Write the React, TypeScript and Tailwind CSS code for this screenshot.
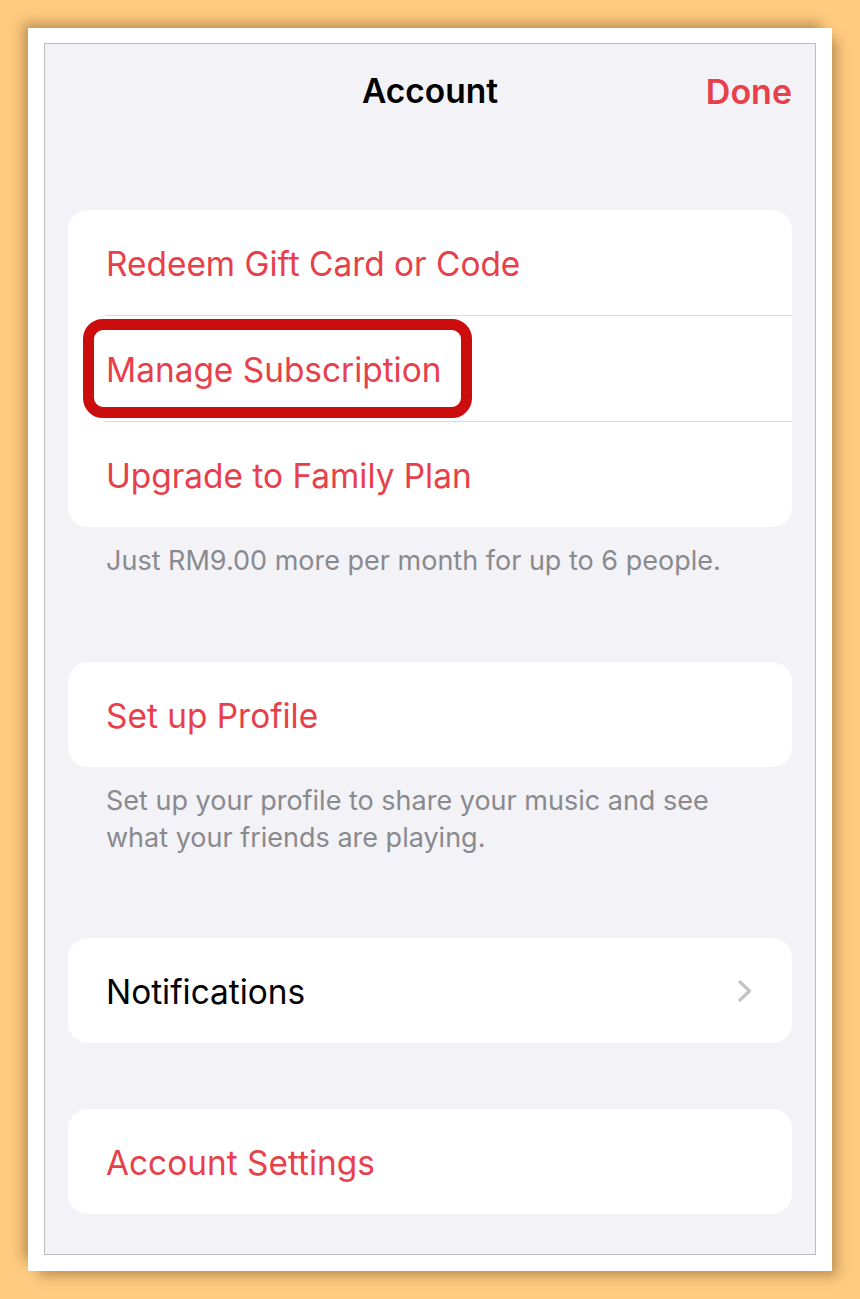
import React from 'react';

const RED = 'text-[#E8404A]';

const Row: React.FC<{ label: string; red?: boolean; chevron?: boolean; children?: React.ReactNode }> = ({
  label,
  red = true,
  chevron = false,
  children,
}) => (
  <div className="relative h-[105px] flex items-center pl-[38px] pr-[39px]">
    <span className={`text-[33.4px] leading-[40px] mt-[2px] ${red ? RED : 'text-black'}`}>{label}</span>
    {chevron && (
      <svg className="ml-auto" width="16" height="24" viewBox="0 0 16 24" fill="none">
        <path d="M3 3l9.5 9L3 21" stroke="#C4C4C7" strokeWidth="3.2" strokeLinecap="round" strokeLinejoin="round" />
      </svg>
    )}
    {children}
  </div>
);

const Separator = () => <div className="h-px bg-[#D9D9DD] ml-[37px]" />;

const Footer: React.FC<{ children: React.ReactNode }> = ({ children }) => (
  <p className="mt-[15px] pl-[38px] pr-[40px] text-[27px] leading-[37px] text-[#8A8A8E]">{children}</p>
);

export default function App() {
  return (
    <div className="w-[860px] h-[1299px] bg-[#FFCB80] pt-[28px] pl-[28px]" style={{ fontFamily: 'Inter, "Noto Sans", sans-serif' }}>
      <div className="w-[804px] h-[1243px] bg-white pt-[15px] pl-[16px] shadow-[-8px_-8px_12px_-3px_rgba(90,60,20,0.4),8px_8px_12px_-3px_rgba(90,60,20,0.4)]">
        <div className="w-[772px] h-[1212px] border border-[#BDBDBD] bg-[#F2F2F7] px-[23px]">
          {/* Nav bar */}
          <div className="relative h-[94px] flex items-center justify-center">
            <span className="text-[33.5px] font-semibold text-black">Account</span>
            <span className={`absolute right-0 text-[34px] font-semibold ${RED}`}>Done</span>
          </div>

          {/* Group 1 */}
          <div className="mt-[72px] bg-white rounded-[20px] overflow-hidden">
            <Row label="Redeem Gift Card or Code" />
            <Separator />
            <Row label="Manage Subscription">
              <div className="absolute left-[15px] top-[3px] w-[389px] h-[99px] border-[11px] border-[#CC0D0D] rounded-[20px]" />
            </Row>
            <Separator />
            <Row label="Upgrade to Family Plan" />
          </div>
          <Footer>Just RM9.00 more per month for up to 6 people.</Footer>

          {/* Group 2 */}
          <div className="mt-[83px] bg-white rounded-[20px]">
            <Row label="Set up Profile" />
          </div>
          <Footer>Set up your profile to share your music and see what your friends are playing.</Footer>

          {/* Group 3 */}
          <div className="mt-[82px] bg-white rounded-[20px]">
            <Row label="Notifications" red={false} chevron />
          </div>

          {/* Group 4 */}
          <div className="mt-[66px] bg-white rounded-[20px]">
            <Row label="Account Settings" />
          </div>
        </div>
      </div>
    </div>
  );
}
